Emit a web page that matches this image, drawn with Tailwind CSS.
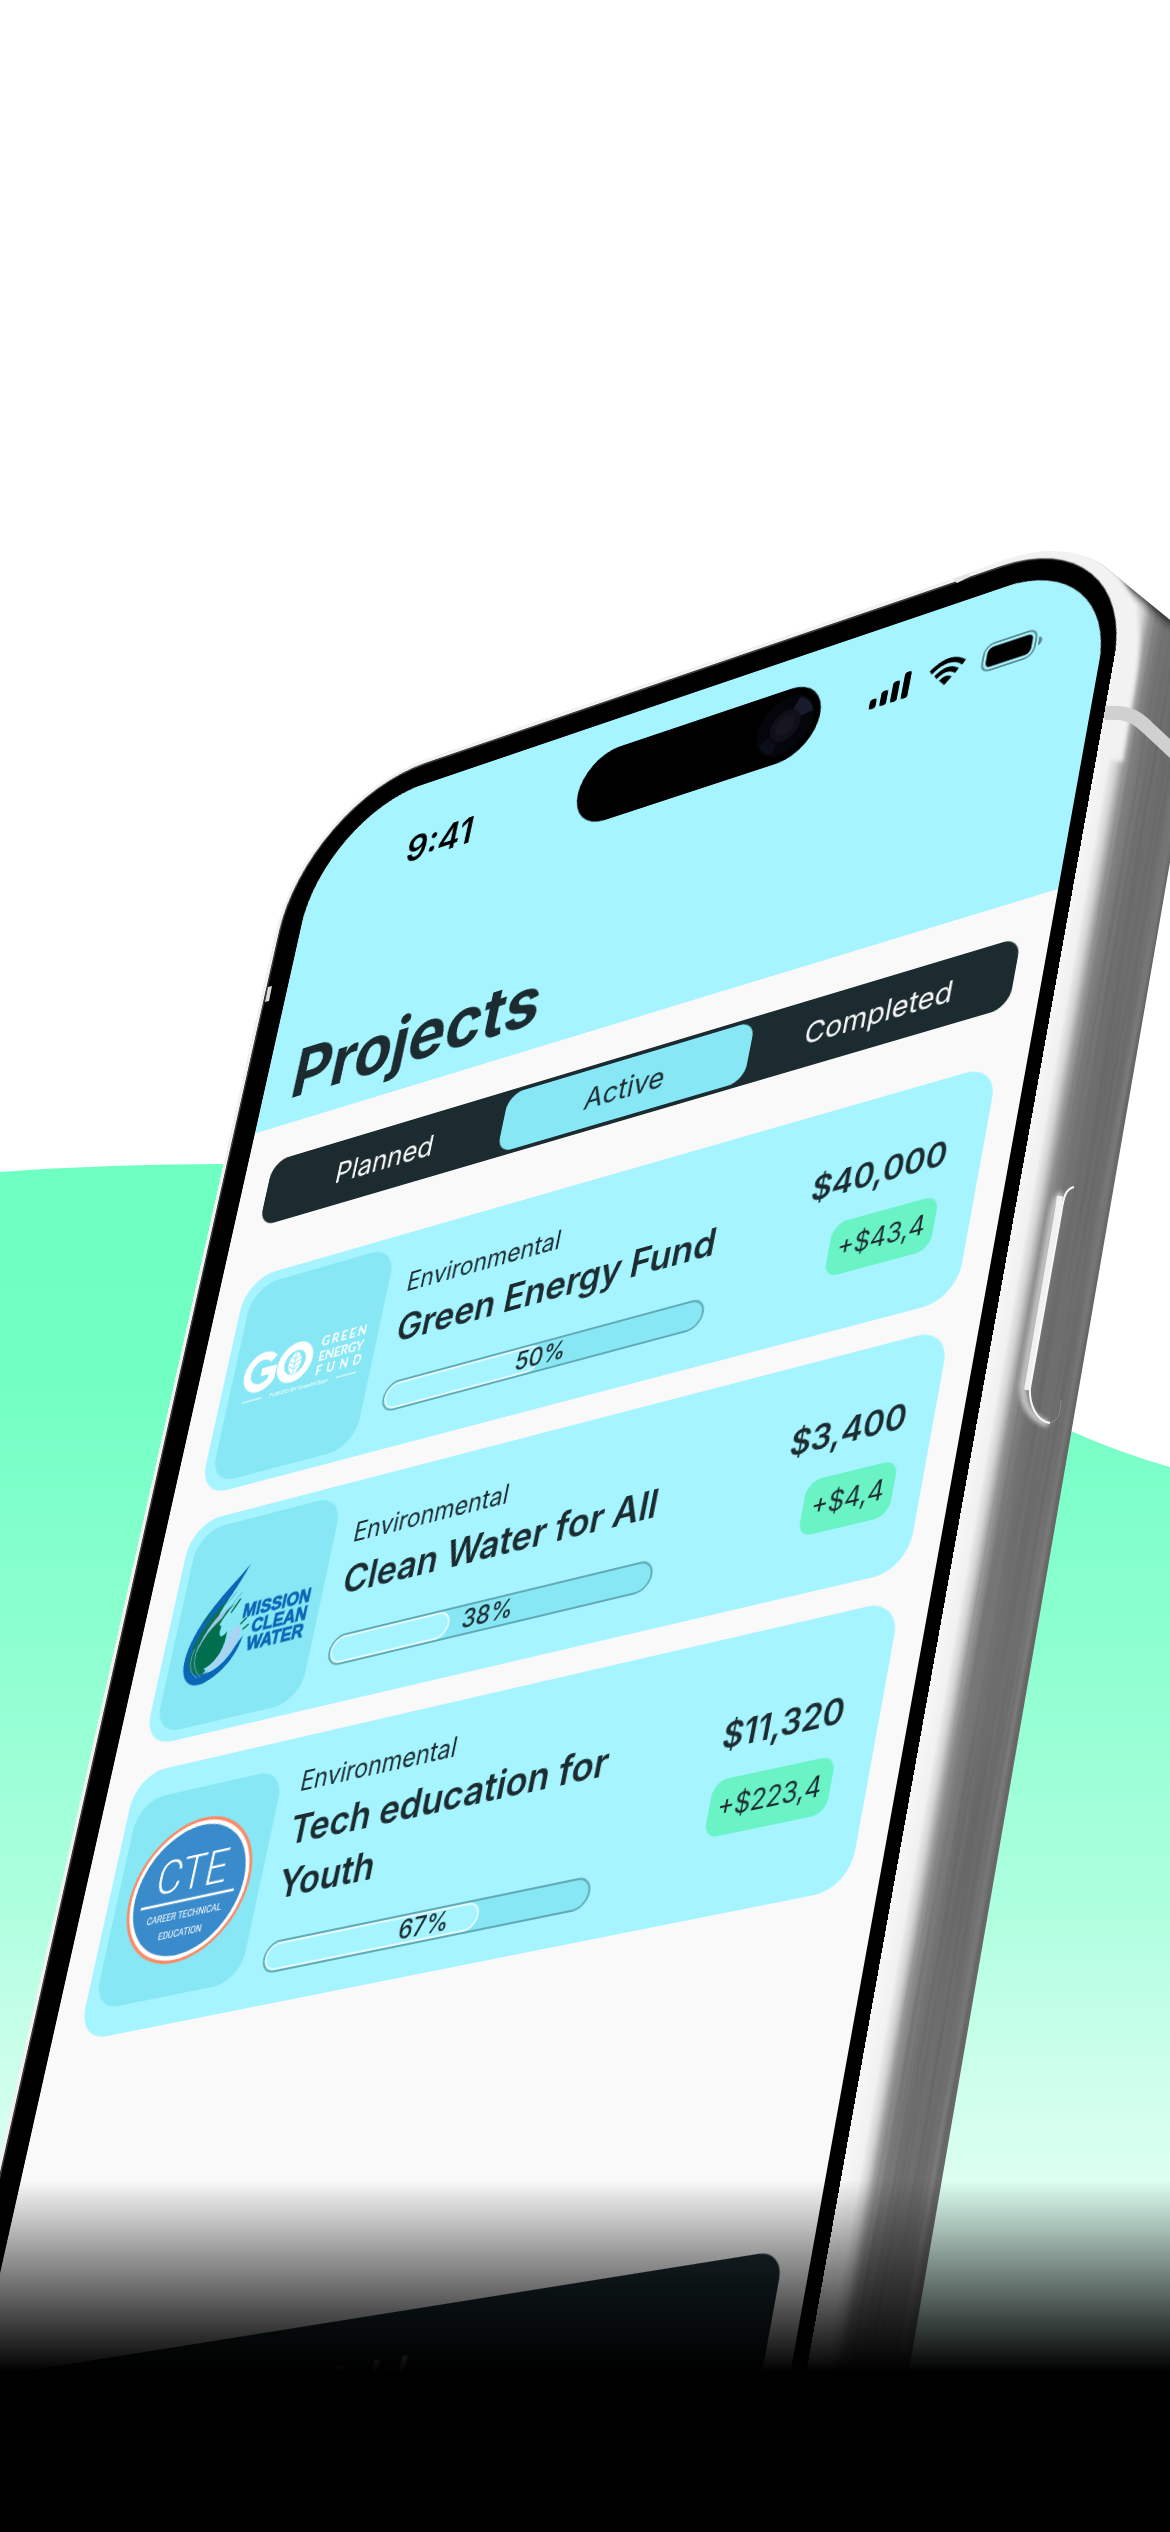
<!DOCTYPE html>
<html lang="en">
<head>
<meta charset="utf-8">
<meta name="viewport" content="width=device-width, initial-scale=1">
<title>Projects</title>
<script src="https://cdn.jsdelivr.net/npm/@tailwindcss/browser@4"></script>
</head>
<body class="bg-black">
<main class="relative h-[2532px] w-full overflow-hidden bg-white font-['Inter',sans-serif] text-[#1b2b2f]">

  <!-- Green hill and the metal side of the phone -->
  <svg class="absolute top-0 left-0" width="1170" height="2532" viewBox="0 0 1170 2532" aria-hidden="true">
    <defs>
      <linearGradient id="hill" gradientUnits="userSpaceOnUse" x1="0" y1="1164" x2="0" y2="2210">
        <stop offset="0" stop-color="#6effc2"/><stop offset=".2" stop-color="#72ffc4"/><stop offset=".45" stop-color="#8cffcf"/>
        <stop offset=".7" stop-color="#acffde"/><stop offset=".88" stop-color="#cfffec"/><stop offset="1" stop-color="#dffff3"/>
      </linearGradient>
      <linearGradient id="metal" gradientUnits="userSpaceOnUse" x1="1045" y1="1040" x2="1136" y2="1056">
        <stop offset="0" stop-color="#f6f6f6"/><stop offset=".15" stop-color="#f1f1f1"/><stop offset=".24" stop-color="#d2d2d2"/>
        <stop offset=".32" stop-color="#9c9c9c"/><stop offset=".42" stop-color="#7d7d7d"/><stop offset=".6" stop-color="#6f6f6f"/>
        <stop offset=".85" stop-color="#6e6e6e"/><stop offset=".95" stop-color="#7a7a7a"/><stop offset="1" stop-color="#686868"/>
      </linearGradient>
      <filter id="soft" x="-20%" y="-20%" width="140%" height="140%"><feGaussianBlur stdDeviation="4"/></filter>
      <filter id="soft2" x="-20%" y="-20%" width="140%" height="140%"><feGaussianBlur stdDeviation="2"/></filter>
      <filter id="brushed" x="0" y="0" width="100%" height="100%">
        <feTurbulence type="fractalNoise" baseFrequency=".3 .004" numOctaves="2" seed="4"/>
        <feColorMatrix type="matrix" values="0 0 0 0 0  0 0 0 0 0  0 0 0 0 0  1.4 0 0 0 -.55"/>
      </filter>
      <clipPath id="side"><path d="M960 577C1010 556 1030 552 1050 551C1072 551 1090 556 1104 566L1170 620V862L881 2532H700L1000 1100Z"/></clipPath>
    </defs>
    <path d="M0 1172Q110 1164 225 1164C560 1164 850 1320 1071 1431Q1120 1453 1170 1467V2532H0Z" fill="url(#hill)"/>
    <g clip-path="url(#side)">
      <rect x="700" y="540" width="470" height="1992" fill="url(#metal)"/>
      <g transform="rotate(10.1 1100 1040)"><rect x="1076" y="400" width="64" height="2300" filter="url(#brushed)" opacity=".12"/></g>
      <path d="M1098 552L1112 563L1180 620" fill="none" stroke="#1a1a1a" stroke-width="18" filter="url(#soft)"/>
      <path d="M950 576C1030 543 1078 545 1106 577C1130 606 1132 636 1125 680L1112 760" fill="none" stroke="#f2f2f2" stroke-width="22" filter="url(#soft2)"/>
      <path d="M1104 713C1128 711 1137 717 1148 728L1178 756" fill="none" stroke="#d0d0d0" stroke-width="14"/>
      <path d="M1062 1194C1056 1198 1054 1206 1052 1218L1023 1385C1022 1405 1032 1419 1048 1424" fill="none" stroke="#c4c4c4" stroke-width="7" filter="url(#soft2)"/>
      <path d="M1060 1196L1058 1210L1027 1390" fill="none" stroke="#f1f1f1" stroke-width="6"/>
      <path d="M1074 1187C1064 1189 1063 1202 1061 1214L1030 1388C1029 1404 1036 1421 1050 1423" fill="none" stroke="#f8f8f8" stroke-width="2"/>
      <path d="M1050 1423C1060 1420 1060 1412 1061 1400" fill="none" stroke="#8e8e8e" stroke-width="1"/>
    </g>
  </svg>

  <!-- Phone front: everything inside lies on the tilted plane -->
  <div class="absolute top-0 left-0 w-[860px] origin-top-left [transform:matrix3d(.81072,-.3688,0,-.00010071,-.22642,.88992,0,-.000054,0,0,1,0,325.5,817.7,0,1)]">
    <div class="-mt-[28px] -ml-[31px] w-[906px] rounded-t-[142px] bg-[#f1f1f1] pt-[4px] pl-[4px]">
     <div class="rounded-t-[138px] bg-[#3a3a3a] pt-[2px] pl-[2px]">
      <div class="rounded-t-[136px] bg-black pt-[22px] pr-[15px] pl-[25px]">
        <div class="relative h-[1820px] overflow-hidden rounded-t-[114px] bg-[#f9f9f9]">

          <header class="flex h-[332px] flex-col justify-between bg-[#a5f4ff]">
            <div class="flex h-[138px] items-center justify-between pr-[64px] pl-[112px] text-black">
              <span class="text-[38px] leading-[44px] font-semibold">9:41</span>
              <div class="flex items-center gap-[17px]">
                <svg width="42" height="27" viewBox="0 0 42 27" aria-label="Signal"><rect x="0" y="17" width="7" height="10" rx="2.5"/><rect x="11" y="12" width="7" height="15" rx="2.5"/><rect x="22" y="6" width="7" height="21" rx="2.5"/><rect x="33" y="0" width="7" height="27" rx="2.5"/></svg>
                <svg width="38" height="27" viewBox="0 0 38 27" aria-label="Wi-Fi"><g fill="none" stroke="#000" stroke-width="5"><path d="M2 9.500Q19-4.500 36 9.500"/><path d="M8 16Q19 7 30 16"/></g><path d="M12.500 20.500Q19 15 25.500 20.500L19 27Z"/></svg>
                <svg width="61" height="29" viewBox="0 0 61 29" aria-label="Battery"><rect x="1" y="1" width="53" height="27" rx="9" fill="none" stroke="#000" stroke-opacity=".42" stroke-width="2"/><rect x="4.500" y="4.500" width="46" height="20" rx="5.500"/><path d="M57 10q3.500 1.500 3.500 4.500t-3.500 4.500z" fill-opacity=".45"/></svg>
              </div>
            </div>
            <h1 class="px-[32px] pb-[10px] text-[70px] leading-[84px] font-bold">Projects</h1>
          </header>

          <!-- Camera island -->
          <div class="absolute top-[32px] left-[306px] flex h-[76px] w-[262px] items-center justify-end rounded-full bg-black pr-[6px]">
            <svg width="62" height="62" viewBox="0 0 62 62" aria-hidden="true"><circle cx="31" cy="31" r="30" fill="#05060b"/><path d="M42 5A29 29 0 0 1 59 24L45 26A16 16 0 0 0 36 17Z" fill="#171b2b"/><path d="M6 44A29 29 0 0 0 22 58L25 47A18 18 0 0 1 15 38Z" fill="#0c0e1a"/><circle cx="31" cy="31" r="16" fill="#110f17"/><circle cx="31" cy="31" r="10" fill="#191520"/></svg>
          </div>

          <nav class="mt-[37px] mr-[29px] ml-[31px] flex h-[67px] rounded-[18px] bg-[#1b2b2f] p-[4px] text-[29px] leading-[34px] text-[#f9f9f9]">
            <button class="flex-1 rounded-[16px]">Planned</button>
            <button class="flex-1 rounded-[16px] bg-[#87e7f5] text-[#1b2b2f]">Active</button>
            <button class="flex-1 rounded-[16px]">Completed</button>
          </nav>

          <section class="mt-[53px] mr-[29px] ml-[31px] flex flex-col gap-[26px]">

            <article class="flex items-center rounded-[32px] bg-[#a5f4ff] pl-[10px] pr-[36px]">
              <div class="my-[10px] flex h-[198px] w-[163px] shrink-0 justify-center rounded-[28px] bg-[#87e7f5]">
                <svg width="160" height="198" viewBox="0 0 160 198" role="img" aria-label="GO Green Energy Fund">
                  <g fill="none" stroke="#fff" stroke-width="8"><path d="M43 83A16 16 0 1 0 44 103V94H31"/><circle cx="69" cy="93" r="16"/></g>
                  <path d="M69 82C78 88 79 98 69 106C59 98 60 88 69 82Z" fill="#fff"/>
                  <path d="M69 82V106M69 90L75 86M69 95L76 91M69 100L75 96M69 90L63 86M69 95L62 91M69 100L63 96" stroke="#87e7f5" stroke-width="1"/>
                  <g fill="#fff" font-family="Lato, sans-serif" font-weight="700" font-size="13"><text x="96" y="84" letter-spacing="2">GREEN</text><text x="96" y="99">ENERGY</text><text x="96" y="113" letter-spacing="5">FUND</text></g>
                  <text x="80" y="123" fill="#fff" font-family="Lato, sans-serif" font-size="6" text-anchor="middle">FUELED BY GrowthOpps</text>
                  <path d="M15 121H38M122 121H145" stroke="#fff" stroke-width="1"/>
                </svg>
              </div>
              <div class="ml-[22px] w-[343px]">
                <p class="text-[25px] leading-[30px]">Environmental</p>
                <h2 class="mt-[6px] text-[37px] leading-[50px] font-semibold">Green Energy Fund</h2>
                <div class="relative mt-[28px] h-[30px] overflow-hidden rounded-full border-2 border-[#62aab5] bg-[#87e7f5]">
                  <div class="h-full rounded-full border-2 border-[#e0fcff] bg-[#a5f4ff]" style="width:50%"></div>
                  <span class="absolute inset-0 text-center text-[24px] leading-[26px] font-medium">50%</span>
                </div>
              </div>
              <div class="ml-auto flex flex-col items-end gap-[19px]">
                <strong class="text-[32px] leading-[40px] font-semibold">$40,000</strong>
                <span class="rounded-[14px] bg-[#6af3c4] px-[9px] text-[25px] leading-[51px]">+$43,4</span>
              </div>
            </article>

            <article class="flex items-center rounded-[32px] bg-[#a5f4ff] pl-[10px] pr-[28px]">
              <div class="my-[10px] flex h-[198px] w-[163px] shrink-0 justify-center rounded-[28px] bg-[#87e7f5]">
                <svg width="160" height="198" viewBox="0 0 160 198" role="img" aria-label="Mission Clean Water">
                  <path d="M69 47C52 66 24 86 16 120C10 150 30 162 46 156C64 150 76 136 78 118L72 126C64 142 50 150 36 147C22 143 22 124 32 106C42 90 58 72 69 47Z" fill="#0b66b5"/>
                  <path d="M52 76C34 92 20 112 20 132C22 146 34 150 46 146C30 142 34 118 46 104C50 96 54 90 60 84C52 88 46 94 42 100C44 90 48 84 52 76Z" fill="#0a7152"/>
                  <path d="M40 104C26 122 26 140 38 143C52 140 60 128 58 110C52 118 48 112 50 104Q46 98 40 104Z" fill="#006f4e"/>
                  <path d="M44 92C34 102 27 116 26 130C28 116 36 104 48 96L56 84Z" fill="#9fc6e8"/>
                  <path d="M70 107C60 108 62 118 58 126C54 134 46 142 40 147C54 146 68 136 73 122C75 114 74 108 70 107Z" fill="#a9d3f2"/>
                  <path d="M24 120C20 134 24 144 34 150M28 116C24 132 28 142 38 150M60 72L48 84M66 74L54 88" stroke="#5fa9c9" stroke-width="1" fill="none"/>
                  <path d="M34 88L28 95M66 80L58 92M72 106L78 101M76 112L82 108" stroke="#0a7152" stroke-width="2" fill="none"/>
                  <g fill="#0b66b5" stroke="#0b66b5" stroke-width=".8" font-family="'Liberation Sans', sans-serif" font-weight="700" font-size="18" text-anchor="end"><text x="148" y="100">MISSION</text><text x="148" y="117">CLEAN</text><text x="148" y="134">WATER</text></g>
                </svg>
              </div>
              <div class="ml-[22px] w-[343px]">
                <p class="text-[25px] leading-[30px]">Environmental</p>
                <h2 class="mt-[6px] text-[37px] leading-[50px] font-semibold">Clean Water for All</h2>
                <div class="relative mt-[28px] h-[30px] overflow-hidden rounded-full border-2 border-[#62aab5] bg-[#87e7f5]">
                  <div class="h-full rounded-full border-2 border-[#e0fcff] bg-[#a5f4ff]" style="width:38%"></div>
                  <span class="absolute inset-0 text-center text-[24px] leading-[26px] font-medium">38%</span>
                </div>
              </div>
              <div class="ml-auto flex flex-col items-end gap-[19px]">
                <strong class="text-[32px] leading-[40px] font-semibold">$3,400</strong>
                <span class="rounded-[14px] bg-[#6af3c4] px-[9px] text-[25px] leading-[51px]">+$4,4</span>
              </div>
            </article>

            <article class="flex items-center rounded-[32px] bg-[#a5f4ff] pl-[10px] pr-[36px]">
              <div class="my-[10px] flex h-[198px] w-[163px] shrink-0 justify-center rounded-[28px] bg-[#87e7f5]">
                <svg width="160" height="198" viewBox="0 0 160 198" role="img" aria-label="CTE Career Technical Education">
                  <circle cx="80" cy="99" r="68" fill="#fb8a66"/><circle cx="80" cy="99" r="65" fill="#fff"/><circle cx="80" cy="99" r="61" fill="#398bcb"/>
                  <g fill="#fff" text-anchor="middle" font-family="Roboto, sans-serif"><text x="80" y="98" font-size="44" font-weight="300">CTE</text><text x="80" y="125" font-size="9">CAREER TECHNICAL</text><text x="80" y="142" font-size="9">EDUCATION</text></g>
                  <path d="M28 108H132" stroke="#fff" stroke-width="2.500"/>
                </svg>
              </div>
              <div class="my-[29px] ml-[22px] w-[343px]">
                <p class="text-[25px] leading-[30px]">Environmental</p>
                <h2 class="mt-[6px] text-[37px] leading-[50px] font-semibold">Tech education for Youth</h2>
                <div class="relative mt-[28px] h-[30px] overflow-hidden rounded-full border-2 border-[#62aab5] bg-[#87e7f5]">
                  <div class="h-full rounded-full border-2 border-[#e0fcff] bg-[#a5f4ff]" style="width:67%"></div>
                  <span class="absolute inset-0 text-center text-[24px] leading-[26px] font-medium">67%</span>
                </div>
              </div>
              <div class="ml-auto flex flex-col items-end gap-[19px]">
                <strong class="text-[32px] leading-[40px] font-semibold">$11,320</strong>
                <span class="rounded-[14px] bg-[#6af3c4] px-[9px] text-[25px] leading-[51px]">+$223,4</span>
              </div>
            </article>
          </section>

          <div class="mt-[304px] mr-[27px] ml-[31px] flex">
            <button class="h-[114px] flex-1 rounded-[24px] bg-[#1b2b2f] text-[46px] font-semibold text-[#f9f9f9]">Add</button>
          </div>
        </div>
      </div>
     </div>
    </div>
  </div>

  <!-- Antenna breaks in the rim -->
  <svg class="absolute top-0 left-0" width="1170" height="2532" viewBox="0 0 1170 2532" aria-hidden="true">
    <path d="M953 579L969 573L969 577L957 583Z" fill="#e4e4e4"/><path d="M268 987L272 986L269 1001L265 1002Z" fill="#dadada"/>
  </svg>

  <!-- Fade to black -->
  <div class="absolute inset-x-0 bottom-0 flex h-[352px] flex-col">
    <div class="h-[192px] bg-linear-to-b from-transparent to-black"></div>
    <div class="flex-1 bg-black"></div>
  </div>
</main>
</body>
</html>
